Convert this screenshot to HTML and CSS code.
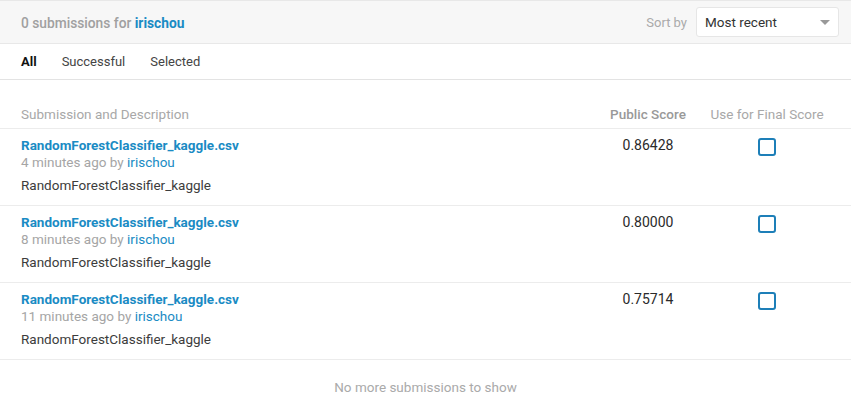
FILE: index.html
```html
<!DOCTYPE html>
<html>
<head>
<meta charset="utf-8">
<link rel="stylesheet" href="styles.css">
</head>
<body>
<div class="page">
  <div class="topbar">
    <div class="count">0 submissions for <span class="user">irischou</span></div>
    <div class="sort">
      <span class="sort-label">Sort by</span>
      <div class="select">
        <span>Most recent</span>
        <span class="caret"></span>
      </div>
    </div>
  </div>
  <div class="tabs">
    <span class="tab active">All</span>
    <span class="tab">Successful</span>
    <span class="tab">Selected</span>
  </div>
  <div class="table">
    <div class="row head">
      <div class="c-desc">Submission and Description</div>
      <div class="c-score strong">Public Score</div>
      <div class="c-use">Use for Final Score</div>
    </div>
    <div class="row">
      <div class="c-desc">
        <div class="fname">RandomForestClassifier_kaggle.csv</div>
        <div class="meta">4 minutes ago by <span class="link">irischou</span></div>
        <div class="descr">RandomForestClassifier_kaggle</div>
      </div>
      <div class="c-score">0.86428</div>
      <div class="c-use"><span class="check"></span></div>
    </div>
    <div class="row">
      <div class="c-desc">
        <div class="fname">RandomForestClassifier_kaggle.csv</div>
        <div class="meta">8 minutes ago by <span class="link">irischou</span></div>
        <div class="descr">RandomForestClassifier_kaggle</div>
      </div>
      <div class="c-score">0.80000</div>
      <div class="c-use"><span class="check"></span></div>
    </div>
    <div class="row">
      <div class="c-desc">
        <div class="fname">RandomForestClassifier_kaggle.csv</div>
        <div class="meta">11 minutes ago by <span class="link">irischou</span></div>
        <div class="descr">RandomForestClassifier_kaggle</div>
      </div>
      <div class="c-score">0.75714</div>
      <div class="c-use"><span class="check"></span></div>
    </div>
  </div>
  <div class="nomore">No more submissions to show</div>
</div>
</body>
</html>
```
FILE: styles.css
```css
html, body {
  margin: 0;
  padding: 0;
  background: #fff;
}
body {
  font-family: Roboto, "Liberation Sans", Arial, sans-serif;
  font-size: 13.5px;
  color: #3c3c3c;
}
.topbar {
  height: 42px;
  border-top: 1px solid #e8e8e8;
  border-bottom: 1px solid #e8e8e8;
  background: #f7f7f7;
  display: flex;
  align-items: center;
  justify-content: space-between;
  padding: 0 12px 0 21px;
}
.count {
  font-weight: 500;
  color: #a0a0a0;
  font-size: 13.75px;
  padding-top: 1px;
}
.user {
  color: #1a8bc4;
  font-weight: 700;
}
.sort {
  display: flex;
  align-items: center;
  gap: 9px;
}
.sort-label {
  color: #aaa;
  font-size: 13px;
}
.select {
  box-sizing: border-box;
  width: 143px;
  height: 30px;
  background: #fff;
  border: 1px solid #e6e6e6;
  border-radius: 3px;
  display: flex;
  align-items: center;
  justify-content: space-between;
  padding: 0 8px 0 8px;
  color: #333;
  font-size: 13.5px;
}
.caret {
  width: 0;
  height: 0;
  border-left: 5px solid transparent;
  border-right: 5px solid transparent;
  border-top: 5px solid #999;
}
.tabs {
  height: 35px;
  border-bottom: 1px solid #e3e3e3;
  display: flex;
  align-items: center;
  padding-left: 21px;
  gap: 25px;
  font-size: 13px;
}
.tab {
  color: #444;
}
.tab.active {
  color: #111;
  font-weight: 700;
}
.row {
  display: grid;
  grid-template-columns: 1fr 90px 120px;
  column-gap: 14px;
  padding: 0 24px 0 21px;
  border-bottom: 1px solid #ececec;
  height: 76px;
  box-sizing: content-box;
}
.row.head {
  height: 48px;
  align-items: end;
  color: #a8a8a8;
  white-space: nowrap;
}
.row.head > div {
  padding-bottom: 6px;
}
.strong {
  font-weight: 500;
  color: #999;
}
.c-score, .c-use {
  text-align: center;
}
.row:not(.head) > div {
  padding-top: 8px;
}
.row:not(.head) .c-score {
  color: #2a2a2a;
  font-size: 14px;
  padding-top: 8px;
}
.fname {
  color: #1a8bc4;
  font-weight: 700;
  line-height: 17px;
}
.meta {
  color: #a5a5a5;
  font-size: 13.5px;
  line-height: 17px;
}
.link {
  color: #1a8bc4;
}
.descr {
  margin-top: 6px;
  color: #3c3c3c;
  line-height: 17px;
}
.c-use {
  display: flex;
  justify-content: center;
}
.check {
  display: block;
  box-sizing: border-box;
  width: 18px;
  height: 18px;
  border: 2px solid #1d7fb8;
  border-radius: 3px;
  margin-top: 1px;
}
.nomore {
  text-align: center;
  color: #aaa;
  padding-top: 19px;
}
```
